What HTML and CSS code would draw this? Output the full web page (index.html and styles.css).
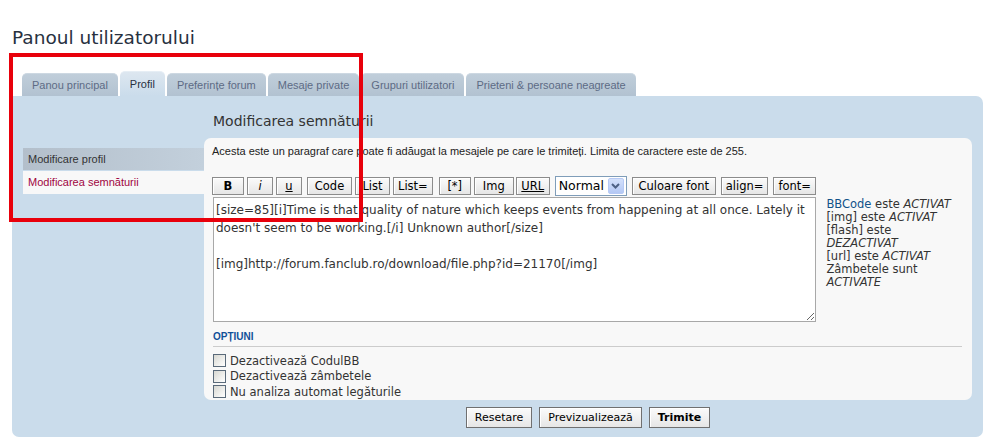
FILE: index.html
```html
<!DOCTYPE html>
<html>
<head>
    <meta charset="utf-8">
    <link rel="stylesheet" href="styles.css">
</head>
<body>
    <div class="page">
        <h2 class="title">Panoul utilizatorului</h2>

        <ul class="tabs">
            <li>Panou principal</li>
            <li class="active">Profil</li>
            <li>Preferințe forum</li>
            <li>Mesaje private</li>
            <li>Grupuri utilizatori</li>
            <li>Prieteni &amp; persoane neagreate</li>
        </ul>

        <div class="panel">
            <div class="cp-menu">
                <div class="menu-head">Modificare profil</div>
                <div class="menu-item active">Modificarea semnăturii</div>
            </div>

            <div class="cp-main">
                <h3 class="main-title">Modificarea semnăturii</h3>

                <div class="content">
                    <p class="intro">Acesta este un paragraf care poate fi adăugat la mesajele pe care le trimiteți. Limita de caractere este de 255.</p>

                    <div class="toolbar">
                        <button class="bb bb-b">B</button>
                        <button class="bb bb-i">i</button>
                        <button class="bb bb-u">u</button>
                        <button class="bb bb-code">Code</button>
                        <button class="bb bb-list">List</button>
                        <button class="bb">List=</button>
                        <button class="bb bb-star">[*]</button>
                        <button class="bb bb-img">Img</button>
                        <button class="bb bb-url">URL</button>
                        <div class="size-select">
                            <span>Normal</span>
                            <span class="arrow">
                                <svg width="9" height="6" viewBox="0 0 9 6">
                                    <path d="M1 1l3.5 3.5L8 1" fill="none" stroke="#4d6185" stroke-width="2"></path>
                                </svg>
                            </span>
                        </div>
                        <button class="bb bb-color">Culoare font</button>
                        <button class="bb">align=</button>
                        <button class="bb">font=</button>
                    </div>

                    <div class="editor">
                        <textarea class="message">[size=85][i]Time is that quality of nature which keeps events from happening at all once. Lately it doesn't seem to be working.[/i] Unknown author[/size]

[img]http://forum.fanclub.ro/download/file.php?id=21170[/img]</textarea>
                        <div class="help">
                            <a class="link">BBCode</a> este <em>ACTIVAT</em><br>
                            [img] este <em>ACTIVAT</em><br>
                            [flash] este <em>DEZACTIVAT</em><br>
                            [url] este <em>ACTIVAT</em><br>
                            Zâmbetele sunt <em>ACTIVATE</em>
                        </div>
                    </div>

                    <h4 class="options-title">OPȚIUNI</h4>
                    <div class="options">
                        <label class="option"><span class="check"></span>Dezactivează CodulBB</label>
                        <label class="option"><span class="check"></span>Dezactivează zâmbetele</label>
                        <label class="option"><span class="check"></span>Nu analiza automat legăturile</label>
                    </div>
                </div>

                <div class="actions">
                    <button class="btn">Resetare</button>
                    <button class="btn">Previzualizează</button>
                    <button class="btn btn-main">Trimite</button>
                </div>
            </div>
        </div>

        <div class="highlight"></div>
    </div>
</body>
</html>
```

FILE: styles.css
```css
* {
    box-sizing: border-box;
    margin: 0;
    padding: 0;
}

body {
    background-color: #ffffff;
    color: #333333;
    font-family: "Liberation Sans", Arial, sans-serif;
    font-size: 11px;
}

.page {
    position: relative;
    padding: 27px 13px 0 12px;
}

.title {
    font-family: "DejaVu Sans", Verdana, sans-serif;
    font-size: 18.5px;
    font-weight: normal;
    line-height: 22px;
    color: #28313f;
}

.tabs {
    list-style: none;
    display: flex;
    align-items: flex-end;
    gap: 2px;
    margin: 22px 0 0 10px;
    height: 25px;
}

.tabs li {
    height: 23px;
    line-height: 23px;
    padding: 0 10px;
    color: #5d6b85;
    background: linear-gradient(#c0ceda, #b2c2d1);
    border-radius: 5px 5px 0 0;
    border-top: 1px solid #cdd8e2;
}

.tabs li.active {
    height: 25px;
    line-height: 25px;
    color: #28313f;
    background: linear-gradient(#dde7f0, #cadceb);
    border-top: 1px solid #e6eef5;
}

.panel {
    display: flex;
    background-color: #cadceb;
    border-radius: 0 7px 7px 7px;
    padding: 15px 11px 9px 11px;
}

.cp-menu {
    width: 181px;
    margin-top: 37px;
    flex-shrink: 0;
}

.menu-head,
.menu-item {
    height: 22px;
    line-height: 22px;
    padding-left: 5px;
}

.menu-head {
    background: linear-gradient(to right, #b3bfcb, #c3d0dc);
    color: #333333;
    margin-bottom: 1px;
}

.menu-item.active {
    background-color: #f8f8f8;
    color: #a0053f;
    height: 23px;
}

.cp-main {
    width: 768px;
}

.main-title {
    font-family: "DejaVu Sans", Verdana, sans-serif;
    font-size: 14px;
    font-weight: normal;
    line-height: 20px;
    color: #333333;
    padding-left: 9px;
    margin-bottom: 7px;
}

.content {
    background-color: #f8f8f8;
    border-radius: 7px;
    padding: 6px 10px 3px 8px;
    height: 262px;
}

.intro {
    line-height: 14px;
    color: #222222;
    margin-bottom: 18px;
}

.toolbar {
    display: flex;
    align-items: center;
    gap: 3px;
    height: 19px;
    margin-bottom: 2px;
}

.bb,
.btn {
    font-family: "DejaVu Sans", Verdana, sans-serif;
    color: #000000;
    background: linear-gradient(#fbfbfb, #e6e6e6);
    border: 1px solid #8c8c8c;
    box-shadow: inset 1px 1px 0 #ffffff;
    cursor: pointer;
}

.bb {
    height: 18px;
    font-size: 11.5px;
    line-height: 16px;
    padding: 0 4px;
}

.bb-b {
    width: 32px;
    font-weight: bold;
}

.bb-i {
    width: 26px;
    font-style: italic;
}

.bb-u {
    width: 26px;
    text-decoration: underline;
}

.bb-code {
    width: 45px;
    margin-left: 2px;
}

.bb-list {
    width: 35px;
}

.bb-star {
    width: 32px;
    margin-left: 3px;
}

.bb-img {
    width: 40px;
}

.bb-url {
    width: 34px;
    text-decoration: underline;
    margin-left: -1px;
}

.size-select {
    display: flex;
    align-items: center;
    justify-content: space-between;
    width: 72px;
    height: 20px;
    margin-left: 2px;
    padding: 0 2px 0 3px;
    background-color: #ffffff;
    border: 1px solid #7f9db9;
    font-family: "DejaVu Sans", Verdana, sans-serif;
    font-size: 12.5px;
    color: #000000;
}

.size-select .arrow {
    display: flex;
    align-items: center;
    justify-content: center;
    width: 16px;
    height: 16px;
    background: linear-gradient(#d4e1fb, #b4c8f4);
    border: 1px solid #b7caf5;
    border-radius: 2px;
}

.bb-color {
    margin-left: 2px;
    width: 84px;
}

.bb-color ~ .bb {
    margin-left: 2px;
}

.editor {
    display: flex;
    align-items: flex-start;
}

.message {
    width: 605px;
    height: 125px;
    margin-left: 1px;
    padding: 3px 2px;
    font-family: "DejaVu Sans", Verdana, sans-serif;
    font-size: 12px;
    line-height: 18px;
    color: #333333;
    background-color: #ffffff;
    border: 1px solid #a8a8a8;
    outline: none;
    overflow: hidden;
}

.help {
    width: 136px;
    margin-left: 10px;
    padding-top: 1px;
    font-family: "DejaVu Sans", Verdana, sans-serif;
    font-size: 11.5px;
    line-height: 13px;
    color: #333333;
}

.link {
    color: #105289;
}

.options-title {
    margin: 8px 0 0 1px;
    font-size: 10px;
    font-weight: bold;
    line-height: 14px;
    color: #115098;
    padding-bottom: 2px;
    border-bottom: 1px solid #cccccc;
}

.options {
    margin: 6px 0 0 1px;
}

.option {
    display: flex;
    align-items: center;
    gap: 4px;
    height: 15.5px;
    font-family: "DejaVu Sans", Verdana, sans-serif;
    font-size: 11.5px;
    color: #333333;
}

.check {
    width: 13px;
    height: 13px;
    border: 1px solid #5a6a7a;
    background: linear-gradient(135deg, #d8d8d2, #ffffff);
}

.actions {
    display: flex;
    justify-content: center;
    gap: 7px;
    margin-top: 7px;
}

.btn {
    height: 21px;
    font-size: 11px;
    padding: 0 8px;
    border-color: #707070;
}

.btn-main {
    font-weight: bold;
}

.highlight {
    position: absolute;
    left: 9px;
    top: 53px;
    width: 354px;
    height: 169px;
    border: 4px solid #e8000b;
    pointer-events: none;
}
```
